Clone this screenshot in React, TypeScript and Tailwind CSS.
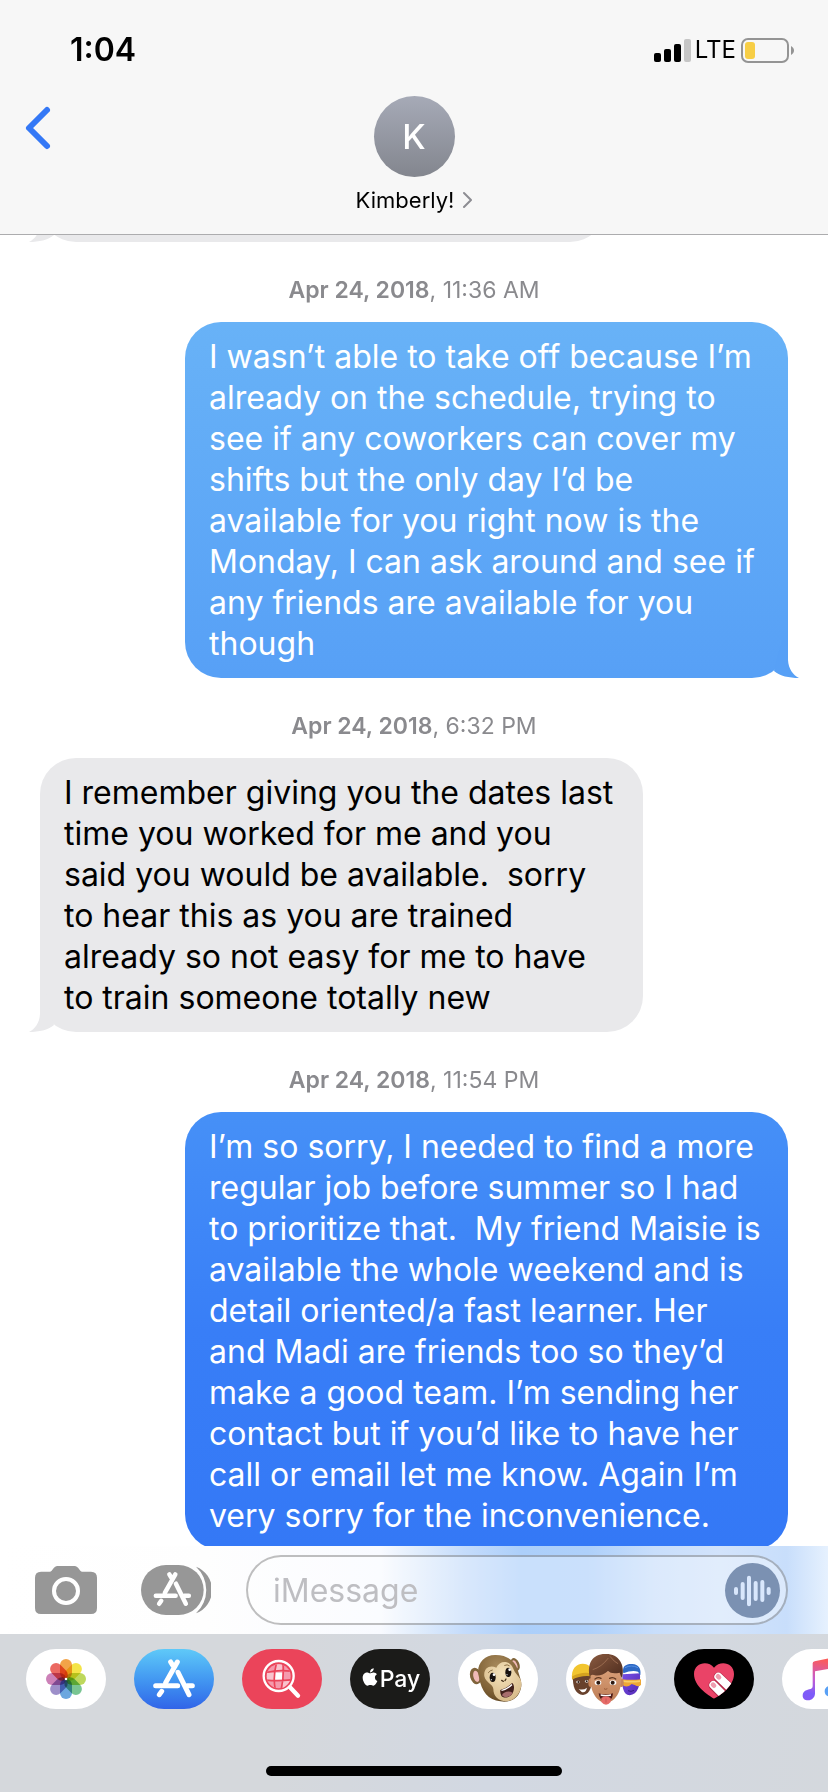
import type { ReactNode } from "react";
import { FaApple } from "react-icons/fa";

type Tone = "sky" | "blue" | "gray";

const bubbleStyles: Record<Tone, string> = {
  sky: "bg-linear-to-b from-[#68b2f7] to-[#57a0f6] text-white",
  blue: "bg-linear-to-b from-[#4690f7] via-[#387ef7] to-[#3478f6] text-white",
  gray: "bg-[#e9e9eb] text-black",
};

const tailStyles: Record<Tone, string> = {
  sky: "text-[#57a0f6] -right-[11px]",
  blue: "text-[#3478f6] -right-[11px]",
  gray: "text-[#e9e9eb] -left-[11px] -scale-x-100",
};

function Tail({ tone }: { tone: Tone }) {
  return (
    <svg viewBox="0 0 47 38" className={`absolute bottom-0 h-[38px] w-[47px] ${tailStyles[tone]}`} aria-hidden="true">
      <path d="M36 0V20C36.500 29 41 35 47 38C37 38 28 36 22 31L30 0Z" fill="currentColor" />
    </svg>
  );
}

function Bubble({ tone, tail = true, children }: { tone: Tone; tail?: boolean; children: ReactNode }) {
  return (
    <div className={`relative w-[603px] max-w-[85%] rounded-[36px] px-6 py-[14px] ${bubbleStyles[tone]} ${tone === "gray" ? "self-start" : "self-end"}`}>
      {tail && <Tail tone={tone} />}
      <p className="whitespace-pre-wrap text-[32px] leading-[41px]">{children}</p>
    </div>
  );
}

function Stamp({ date, time }: { date: string; time: string }) {
  return (
    <div className="flex h-20 shrink-0 items-center justify-center pt-4 text-[23px] leading-7 text-[#8a8a8e]">
      <p>
        <span className="font-semibold">{date}</span>, {time}
      </p>
    </div>
  );
}

function StoreGlyph() {
  return (
    <g fill="none" stroke="#fff" strokeWidth="15" strokeLinecap="round">
      <path d="M110 39l6 10M130 39L95 101" />
      <path d="M65 110h66M160 110h15" />
      <path d="M83 127l-7 10" />
      <path d="M132 70l33 67" />
    </g>
  );
}

const petals = ["#f0962f", "#f2e02f", "#b5d345", "#66bd83", "#589bdb", "#8f7fc2", "#c56fae", "#e8544c"];

function PhotosIcon() {
  return (
    <svg viewBox="0 0 240 180" className="h-full w-full">
      <g style={{ isolation: "isolate" }}>
        {petals.map((fill, i) => (
          <rect key={fill} x="102" y="30" width="36" height="60" rx="18" fill={fill} fillOpacity="0.88" transform={`rotate(${i * 45} 120 90)`} style={{ mixBlendMode: "multiply" }} />
        ))}
      </g>
      <circle cx="120" cy="90" r="4" fill="#fff" />
    </svg>
  );
}

function SearchIcon() {
  return (
    <svg viewBox="66 57 240 180" className="h-full w-full">
      <defs>
        <clipPath id="globe">
          <circle cx="176" cy="139" r="36" />
        </clipPath>
      </defs>
      <g clipPath="url(#globe)">
        <path d="M136 98h80v80h-80z" fill="#f59aad" />
        <path d="M166 98h20v30h-20zM140 128h25v22h-25zM188 152h28v30h-28z" fill="#f9c3cd" />
        <path d="M164 128h23v22h-23z" fill="#fff" />
        <g fill="none" stroke="#eb445a" strokeWidth="5">
          <path d="M136 128q40-10 80-4M136 150q40 4 80-1M170 98q-12 40-4 82M189 98q4 40-6 82" />
        </g>
      </g>
      <circle cx="176" cy="138" r="45" fill="none" stroke="#fff" strokeWidth="7" />
      <path d="M210 172l24 25" stroke="#fff" strokeWidth="13" strokeLinecap="round" />
    </svg>
  );
}

function MonkeyIcon() {
  return (
    <svg viewBox="54 57 240 180" className="h-full w-full">
      <defs>
        <radialGradient id="fur" cx="0.45" cy="0.25" r="0.8">
          <stop offset="0" stopColor="#a88a5c" />
          <stop offset="0.65" stopColor="#806237" />
          <stop offset="1" stopColor="#5f4521" />
        </radialGradient>
        <radialGradient id="muzzle" cx="0.5" cy="0.3" r="0.8">
          <stop offset="0" stopColor="#f5e2bb" />
          <stop offset="1" stopColor="#d3b583" />
        </radialGradient>
      </defs>
      <ellipse cx="107" cy="138" rx="17" ry="25" fill="#80643b" transform="rotate(-14 107 138)" />
      <ellipse cx="109" cy="139" rx="9" ry="17" fill="#f0b9b6" transform="rotate(-14 109 139)" />
      <ellipse cx="226" cy="103" rx="12" ry="20" fill="#80643b" transform="rotate(-24 226 103)" />
      <ellipse cx="224" cy="104" rx="7" ry="14" fill="#f0b9b6" transform="rotate(-24 224 104)" />
      <path d="M117 142C106 106 130 75 165 75C205 74 230 98 235 126C242 150 250 164 238 188C228 209 204 219 181 214C145 211 124 184 117 142Z" fill="url(#fur)" />
      <path d="M133 139C130 113 150 103 169 113C179 89 211 90 220 116C225 132 240 138 244 157C246 180 231 208 205 213C178 216 160 201 160 177C159 163 137 158 133 139Z" fill="url(#muzzle)" />
      <ellipse cx="158" cy="142" rx="9" ry="14" fill="#18110e" />
      <ellipse cx="205" cy="127" rx="9" ry="14" fill="#18110e" />
      <circle cx="162" cy="134" r="4" fill="#fff" />
      <circle cx="209" cy="119" r="4" fill="#fff" />
      <circle cx="154" cy="149" r="2" fill="#cbd5e1" />
      <circle cx="201" cy="134" r="2" fill="#cbd5e1" />
      <path d="M145 128q5-7 12-8M194 106q8-4 14 1" stroke="#8d7045" strokeWidth="3" fill="none" strokeLinecap="round" />
      <path d="M185 151l5 3M198 147l-3 5" stroke="#4d3820" strokeWidth="4" strokeLinecap="round" />
      <path d="M181 180C194 177 207 168 216 159C224 162 224 181 216 193C206 206 187 204 184 197C181 192 180 185 181 180Z" fill="#41201c" />
      <path d="M186 195C192 184 207 181 218 188C210 204 191 205 186 195Z" fill="#a76d6d" />
      <path d="M184 180q17-5 31-18l2 4q-14 13-32 17z" fill="#fff" />
    </svg>
  );
}

function MemojiIcon() {
  return (
    <svg viewBox="378 57 240 180" className="h-full w-full">
      <defs>
        <linearGradient id="skin" x1="0" y1="0" x2="0" y2="1">
          <stop offset="0" stopColor="#d79d76" />
          <stop offset="1" stopColor="#bd7d55" />
        </linearGradient>
        <linearGradient id="hair" x1="0" y1="0" x2="1" y2="1">
          <stop offset="0" stopColor="#8b5b41" />
          <stop offset="1" stopColor="#4b2a1c" />
        </linearGradient>
        <linearGradient id="violet" x1="0" y1="0" x2="1" y2="1">
          <stop offset="0" stopColor="#7650e4" />
          <stop offset="1" stopColor="#5429b5" />
        </linearGradient>
      </defs>
      <path d="M399 138C397 169 406 194 429 195C452 192 457 165 456 138Z" fill="#68412c" />
      <path d="M396 147C393 115 409 102 428 101C448 101 457 115 457 136Q425 130 396 147Z" fill="#f2c52f" />
      <path d="M397 139Q424 124 457 130V139Q424 134 396 149Z" fill="#d5a21f" />
      <ellipse cx="414" cy="156" rx="5" ry="4" fill="#fff" />
      <ellipse cx="440" cy="154" rx="5" ry="4" fill="#fff" />
      <circle cx="415" cy="156" r="3" fill="#24150f" />
      <circle cx="440" cy="154" r="3" fill="#24150f" />
      <path d="M416 177Q430 182 441 173Q437 190 425 186Z" fill="#fff" />
      <path d="M548 133C545 170 548 194 569 196C593 194 602 167 600 130Z" fill="url(#violet)" />
      <path d="M550 130C545 108 559 101 577 102C596 103 604 115 601 136L594 125Q575 120 550 130Z" fill="#2e69c5" />
      <path d="M555 113q19-10 39 0" stroke="#5591e4" strokeWidth="3" fill="none" />
      <path d="M546 148Q574 151 603 148V164Q597 173 584 165L575 162Q559 177 546 163Z" fill="#eea735" />
      <path d="M549 151Q574 154 600 151V156Q574 159 549 156Z" fill="#f8cf68" />
      <path d="M564 182q9 5 18-1" stroke="#371c83" strokeWidth="3" fill="none" />
      <ellipse cx="452" cy="158" rx="7" ry="13" fill="#c78559" />
      <ellipse cx="544" cy="158" rx="7" ry="13" fill="#c78559" />
      <path d="M453 125C448 162 455 210 497 219C539 212 548 164 542 122Z" fill="url(#skin)" />
      <path d="M449 140C441 101 457 72 495 72C535 70 557 102 546 145Q542 138 539 128Q514 133 504 123Q482 141 462 135Q454 132 449 140Z" fill="url(#hair)" />
      <path d="M458 119q27-8 47-35M510 79q13 17 24 22" stroke="#9a6b50" strokeWidth="3" fill="none" />
      <path d="M465 147q10-7 18-2M509 145q10-5 18 2" stroke="#603821" strokeWidth="4" fill="none" strokeLinecap="round" />
      <ellipse cx="474" cy="158" rx="10" ry="7" fill="#fff" />
      <ellipse cx="519" cy="158" rx="10" ry="7" fill="#fff" />
      <circle cx="475" cy="158" r="6" fill="#2c1911" />
      <circle cx="518" cy="158" r="6" fill="#2c1911" />
      <path d="M492 176q5 4 10 0" stroke="#985a39" strokeWidth="3" fill="none" />
      <path d="M476 190Q497 197 519 190Q518 209 506 212H489Q478 207 476 190Z" fill="#501d18" />
      <path d="M482 193q15 4 31 0v4q-16 3-31 0z" fill="#fff" />
      <path d="M484 204Q497 194 512 204V216Q498 233 484 216Z" fill="#e66c69" />
      <path d="M498 205v13" stroke="#bf4b4d" strokeWidth="2" />
    </svg>
  );
}

function HeartIcon() {
  return (
    <svg viewBox="102 57 240 180" className="h-full w-full">
      <defs>
        <clipPath id="heart">
          <path d="M222 206C204 195 162 169 162 132C162 98 204 89 222 113C241 89 282 98 282 132C282 169 240 196 222 206Z" />
        </clipPath>
      </defs>
      <g clipPath="url(#heart)">
        <path d="M155 90h135v125H155z" fill="#ea4367" />
        <path d="M235 141l46 44M220 166l42 42" stroke="#b72c4b" strokeWidth="29" strokeLinecap="round" />
        <path d="M235 140l46 44M220 165l42 42" stroke="#fff" strokeWidth="24" strokeLinecap="round" />
        <path d="M234 139l3 3M219 164l3 3" stroke="#ef9cae" strokeWidth="14" strokeLinecap="round" />
      </g>
    </svg>
  );
}

function MusicIcon() {
  return (
    <svg viewBox="426 57 240 180" className="h-full w-full">
      <defs>
        <linearGradient id="note" gradientUnits="userSpaceOnUse" x1="540" y1="88" x2="515" y2="210">
          <stop offset="0" stopColor="#fb5c5b" />
          <stop offset="0.5" stopColor="#c45cd0" />
          <stop offset="0.85" stopColor="#7c5cfa" />
          <stop offset="1" stopColor="#8358f5" />
        </linearGradient>
      </defs>
      <path d="M518 100Q518 95 524 94L586 81Q592 80 592 87V112L525 124V190C525 203 516 211 504 211C494 211 488 205 488 197C488 183 500 179 512 177Q518 176 518 169Z" fill="url(#note)" />
      <path d="M585 105h7v73c0 14-9 22-21 22-10 0-17-6-17-16 0-13 12-17 24-19q7-1 7-8z" fill="#58a0f5" />
    </svg>
  );
}

function StoreIcon() {
  return (
    <svg viewBox="0 0 240 180" className="h-full w-full">
      <StoreGlyph />
    </svg>
  );
}

const apps: { name: string; className: string; icon: ReactNode }[] = [
  { name: "Photos", className: "bg-white", icon: <PhotosIcon /> },
  { name: "App Store", className: "bg-linear-to-b from-[#5fc9f8] to-[#3264e8]", icon: <StoreIcon /> },
  { name: "Image search", className: "bg-[#eb445a]", icon: <SearchIcon /> },
  {
    name: "Apple Pay",
    className: "bg-[#1b1b19] text-white",
    icon: (
      <span className="flex h-full items-center justify-center text-[23px] leading-none font-medium">
        <FaApple className="mb-1 size-5" />
        Pay
      </span>
    ),
  },
  { name: "Animoji", className: "bg-white", icon: <MonkeyIcon /> },
  { name: "Memoji", className: "bg-white", icon: <MemojiIcon /> },
  { name: "Digital Touch", className: "bg-black", icon: <HeartIcon /> },
  { name: "Music", className: "bg-white", icon: <MusicIcon /> },
];

function Header() {
  return (
    <header className="shrink-0 border-b border-[#acacae] bg-[#f7f7f7]">
      <div className="flex h-24 items-center justify-between pt-1 pr-[34px] pl-[70px]">
        <time className="text-[32px] leading-10 font-semibold">1:04</time>
        <div className="flex items-center">
          <svg viewBox="0 0 37 23" className="h-[23px] w-[37px]" role="img" aria-label="Signal">
            <rect x="0" y="14" width="7" height="9" rx="2" />
            <rect x="10" y="10" width="7" height="13" rx="2" />
            <rect x="20" y="5" width="7" height="18" rx="2" />
            <rect x="30" y="0" width="7" height="23" rx="2" fill="#c6c6c6" />
          </svg>
          <span className="pr-[5px] pl-1 text-[24px] leading-8">LTE</span>
          <svg viewBox="0 0 53 25" className="h-[25px] w-[53px]" role="img" aria-label="Battery">
            <rect x="1" y="1" width="46" height="23" rx="6" fill="none" stroke="#949494" strokeWidth="2" />
            <rect x="4" y="4" width="10" height="17" rx="3" fill="#f7ce46" />
            <path d="M50 8c4 2 4 7 0 9z" fill="#949494" />
          </svg>
        </div>
      </div>
      <div className="grid h-[138px] grid-cols-[1fr_auto_1fr] items-start">
        <button type="button" aria-label="Back" className="mt-2 ml-6 h-12 w-8">
          <svg viewBox="0 0 32 48" className="h-12 w-8" fill="none" stroke="#3478f6" strokeWidth="6" strokeLinecap="round" strokeLinejoin="round">
            <path d="M23 6L5 24L23 42" />
          </svg>
        </button>
        <button type="button" className="flex flex-col items-center gap-[7px]">
          <span className="flex size-[81px] items-center justify-center rounded-full bg-linear-to-b from-[#a6aab7] to-[#83868e] text-[34px] leading-10 font-medium text-white">K</span>
          <span className="flex items-center gap-2 text-[22px] leading-8">
            Kimberly!
            <svg viewBox="0 0 10 18" className="h-[18px] w-[10px]" fill="none" stroke="#8d8d93" strokeWidth="2" strokeLinecap="round" strokeLinejoin="round">
              <path d="M2 2L9 9L2 16" />
            </svg>
          </span>
        </button>
      </div>
    </header>
  );
}

function Composer() {
  return (
    <form className="flex h-[88px] shrink-0 items-center bg-[linear-gradient(90deg,#fff_0%,#fefefe_25%,#f8faff_46%,#e3eefc_50%,#c5dcfb_56%,#accffa_63%,#aed0fa_71%,#c8defb_79%,#d2e3fb_87%,#c8defb_95%,#e6f1fe_100%)] pr-10 pl-[35px]">
      <button type="button" aria-label="Camera">
        <svg viewBox="0 0 186 144" className="h-12 w-[62px]">
          <path d="M18 17H44C54 17 54 0 68 0H118C132 0 132 17 142 17H168Q186 17 186 35V126Q186 144 168 144H18Q0 144 0 126V35Q0 17 18 17Z" fill="#979797" />
          <circle cx="93" cy="75" r="36" fill="none" stroke="#fff" strokeWidth="12" />
        </svg>
      </button>
      <button type="button" aria-label="Apps" className="ml-11">
        <svg viewBox="0 0 210 150" className="h-[50px] w-[70px]">
          <path d="M165 5A75 75 0 0 1 165 145A95 95 0 0 0 165 5Z" fill="#979797" />
          <path d="M75 0H113A75 75 0 0 1 113 150H75A75 75 0 0 1 75 0Z" fill="#979797" />
          <g transform="translate(-14 -7) scale(0.9)">
            <StoreGlyph />
          </g>
        </svg>
      </button>
      <div className="ml-[35px] flex h-[70px] min-w-0 flex-1 items-center rounded-full border-2 border-black/25 bg-white/35 pr-[6px] pl-[25px]">
        <input type="text" aria-label="Message" placeholder="iMessage" className="h-full min-w-0 flex-1 bg-transparent text-[32px] outline-none placeholder:text-[#bebec2]" />
        <button type="button" aria-label="Record audio" className="size-[55px] shrink-0 rounded-full bg-[#7b91b2]">
          <svg viewBox="0 0 165 165" className="size-[55px]" stroke="#d9e7fc" strokeWidth="12" strokeLinecap="round">
            <path d="M33 78v12M53 63v42M72 44v80M92 60v48M112 57v54M131 78v12" />
          </svg>
        </button>
      </div>
    </form>
  );
}

export default function App() {
  return (
    <div className="flex h-screen flex-col overflow-hidden bg-white font-[Inter,'Liberation_Sans',sans-serif] text-black">
      <Header />
      <main className="flex min-h-0 flex-1 flex-col overflow-hidden px-10">
        <div className="-mx-10 flex h-[7px] shrink-0 items-end overflow-hidden px-10">
          <div className="relative h-20 w-[566px] max-w-[80%] shrink-0 rounded-[36px] bg-[#e9e9eb]">
            <Tail tone="gray" />
          </div>
        </div>
        <Stamp date="Apr 24, 2018" time="11:36 AM" />
        <Bubble tone="sky">
          I wasn’t able to take off because I’m already on the schedule, trying to see if any coworkers can cover my shifts but the only day I’d be available for you right now is the Monday, I can ask around and see if any friends are available for you though
        </Bubble>
        <Stamp date="Apr 24, 2018" time="6:32 PM" />
        <Bubble tone="gray">
          {"I remember giving you the dates last time you worked for me and you said you would be available.  sorry to hear this as you are trained already so not easy for me to have to train someone totally new"}
        </Bubble>
        <Stamp date="Apr 24, 2018" time="11:54 PM" />
        <Bubble tone="blue" tail={false}>
          {"I’m so sorry, I needed to find a more regular job before summer so I had to prioritize that.  My friend Maisie is available the whole weekend and is detail oriented/a fast learner. Her and Madi are friends too so they’d make a good team. I’m sending her contact but if you’d like to have her call or email let me know. Again I’m very sorry for the inconvenience."}
        </Bubble>
      </main>
      <Composer />
      <footer className="flex h-[158px] shrink-0 flex-col items-center justify-between bg-[linear-gradient(100deg,#d5d8dc_35%,#d2d8e2_60%,#d4d8dd_100%)] pt-[15px] pb-4">
        <nav aria-label="Apps" className="flex w-full gap-7 overflow-hidden pl-[26px]">
          {apps.map((app) => (
            <button key={app.name} type="button" aria-label={app.name} className={`h-[60px] w-20 shrink-0 overflow-hidden rounded-full ${app.className}`}>
              {app.icon}
            </button>
          ))}
        </nav>
        <div className="h-[10px] w-[296px] rounded-full bg-black" />
      </footer>
    </div>
  );
}
